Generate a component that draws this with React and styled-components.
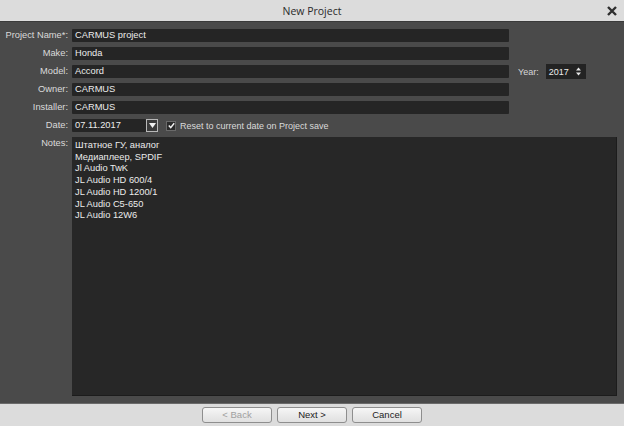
import React from "react";
import styled, { createGlobalStyle } from "styled-components";

const GlobalStyle = createGlobalStyle`
  html, body {
    margin: 0;
    padding: 0;
    background: #4a4a4a;
  }
  body {
    font-family: "Liberation Sans", Arial, sans-serif;
    font-size: 9px;
  }
`;

const fields = [
  { label: "Project Name*:", value: "CARMUS project" },
  { label: "Make:", value: "Honda" },
  { label: "Model:", value: "Accord", year: "2017" },
  { label: "Owner:", value: "CARMUS" },
  { label: "Installer:", value: "CARMUS" },
];

const notes = [
  "Штатное ГУ, аналог",
  "Медиаплеер, SPDIF",
  "Jl Audio TwK",
  "JL Audio HD 600/4",
  "JL Audio HD 1200/1",
  "JL Audio C5-650",
  "JL Audio 12W6",
];

const App = () => {
  return (
    <Window>
      <GlobalStyle />
      <TitleBar>
        <Title>New Project</Title>
        <Close>
          <svg width="10" height="10" viewBox="0 0 10 10">
            <path d="M1 1 L9 9 M9 1 L1 9" stroke="#2e2e2e" strokeWidth="2.4" />
          </svg>
        </Close>
      </TitleBar>
      <Body>
        {fields.map((f) => (
          <React.Fragment key={f.label}>
            <Label>{f.label}</Label>
            <Row>
              <Input>{f.value}</Input>
              {f.year && (
                <>
                  <YearLabel>Year:</YearLabel>
                  <Spinner>
                    <span>{f.year}</span>
                    <Arrows>
                      <svg width="5" height="9" viewBox="0 0 5 9">
                        <path d="M0 3.5 L2.5 0.5 L5 3.5 Z" fill="#e6e6e6" />
                        <path d="M0 5.5 L2.5 8.5 L5 5.5 Z" fill="#e6e6e6" />
                      </svg>
                    </Arrows>
                  </Spinner>
                </>
              )}
            </Row>
          </React.Fragment>
        ))}
        <Label>Date:</Label>
        <Row>
          <Input $width={74}>07.11.2017</Input>
          <DropButton>
            <svg width="7" height="5" viewBox="0 0 7 5">
              <path d="M0 0 L7 0 L3.5 5 Z" fill="#f0f0f0" />
            </svg>
          </DropButton>
          <Check>
            <svg width="7" height="7" viewBox="0 0 7 7">
              <path d="M0.8 3.6 L2.7 5.6 L6.2 1.2" stroke="#f2f2f2" strokeWidth="1.5" fill="none" />
            </svg>
          </Check>
          <CheckText>Reset to current date on Project save</CheckText>
        </Row>
        <Label $top>Notes:</Label>
        <Notes>
          {notes.map((n) => (
            <div key={n}>{n}</div>
          ))}
        </Notes>
      </Body>
      <Footer>
        <Button disabled>&lt; Back</Button>
        <Button>Next &gt;</Button>
        <Button>Cancel</Button>
      </Footer>
    </Window>
  );
};

export default App;

const Window = styled.div`
  width: 624px;
  height: 426px;
  display: flex;
  flex-direction: column;
  background: #4a4a4a;
  overflow: hidden;
`;

const TitleBar = styled.div`
  height: 22px;
  flex: none;
  position: relative;
  display: flex;
  align-items: center;
  justify-content: center;
  background: #dcdcdc;
  border-bottom: 1px solid #3a3a3a;
  box-sizing: border-box;
`;

const Title = styled.div`
  font-family: "Open Sans", "Liberation Sans", sans-serif;
  font-size: 10.5px;
  color: #2a2a2a;
`;

const Close = styled.div`
  position: absolute;
  right: 7px;
  top: 6px;
  display: flex;
`;

const Body = styled.div`
  flex: 1;
  display: grid;
  grid-template-columns: 68px 1fr;
  grid-template-rows: repeat(6, 13px) 1fr;
  column-gap: 4px;
  row-gap: 5px;
  padding: 7px 7px 7px 0;
  box-sizing: border-box;
  min-height: 0;
`;

const Label = styled.div`
  text-align: right;
  color: #dadada;
  font-size: 9.3px;
  line-height: 13px;
  white-space: nowrap;
  align-self: ${(p) => (p.$top ? "start" : "center")};
`;

const Row = styled.div`
  display: flex;
  align-items: center;
  height: 13px;
`;

const Input = styled.div`
  width: ${(p) => p.$width || 437}px;
  height: 13px;
  box-sizing: border-box;
  background: #252525;
  color: #ececec;
  font-size: 9.3px;
  padding-left: 3px;
  line-height: 13px;
  border-radius: 1px;
  flex: none;
`;

const YearLabel = styled.div`
  color: #d6d6d6;
  margin-left: 9px;
  margin-right: 7px;
`;

const Spinner = styled.div`
  width: 40px;
  height: 15px;
  margin: -1px 0;
  box-sizing: border-box;
  background: #232323;
  color: #ececec;
  display: flex;
  align-items: center;
  justify-content: space-between;
  padding: 0 5px 0 3px;
`;

const Arrows = styled.div`
  display: flex;
  align-items: center;
`;

const DropButton = styled.div`
  width: 12px;
  height: 13px;
  box-sizing: border-box;
  border: 1px solid #b8b8b8;
  background: #3a3a3a;
  display: flex;
  align-items: center;
  justify-content: center;
  flex: none;
`;

const Check = styled.div`
  width: 10px;
  height: 10px;
  margin-left: 8px;
  box-sizing: border-box;
  border: 1px solid #6a6a6a;
  background: #2a2a2a;
  display: flex;
  align-items: center;
  justify-content: center;
`;

const CheckText = styled.div`
  color: #dadada;
  margin-left: 4px;
  white-space: nowrap;
`;

const Notes = styled.div`
  background: #272727;
  color: #ececec;
  font-size: 9.3px;
  padding: 3px 3px;
  line-height: 11.7px;
  border-bottom: 1px solid #1c1c1c;
  border-right: 1px solid #1c1c1c;
  min-height: 0;
`;

const Footer = styled.div`
  height: 23px;
  flex: none;
  background: #dcdcdc;
  border-top: 1px solid #6a6a6a;
  box-sizing: border-box;
  display: flex;
  align-items: center;
  justify-content: center;
  gap: 5px;
`;

const Button = styled.button`
  width: 70px;
  height: 16px;
  box-sizing: border-box;
  border: 1px solid #8e8e8e;
  border-radius: 3px;
  background: linear-gradient(#f6f6f6, #e0e0e0);
  font-family: "Liberation Sans", Arial, sans-serif;
  font-size: 9.5px;
  color: ${(p) => (p.disabled ? "#a0a0a0" : "#222")};
  padding: 0;
  line-height: 14px;
`;
